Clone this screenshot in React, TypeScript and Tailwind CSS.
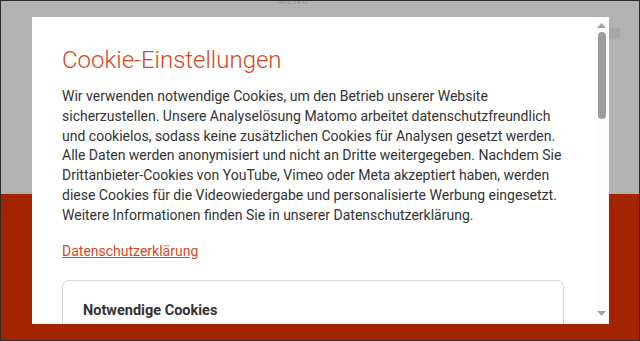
import React from "react";

const bodyText =
  "Wir verwenden notwendige Cookies, um den Betrieb unserer Website sicherzustellen. Unsere Analyselösung Matomo arbeitet datenschutzfreundlich und cookielos, sodass keine zusätzlichen Cookies für Analysen gesetzt werden. Alle Daten werden anonymisiert und nicht an Dritte weitergegeben. Nachdem Sie Drittanbieter-Cookies von YouTube, Vimeo oder Meta akzeptiert haben, werden diese Cookies für die Videowiedergabe und personalisierte Werbung eingesetzt. Weitere Informationen finden Sie in unserer Datenschutzerklärung.";

const App: React.FC = () => {
  return (
    <div
      className="relative w-[640px] h-[341px] overflow-hidden border border-[#2b2b2b] flex flex-col"
      style={{ fontFamily: "Roboto, 'Liberation Sans', sans-serif" }}
    >
      {/* page behind the dimmed overlay */}
      <div className="h-[193px] bg-[#b2b2b2] relative">
        <div className="absolute -top-[8px] left-[276px] text-[10px] tracking-widest text-[#969696]">
          MENÜ
        </div>
        <div className="absolute top-[27px] right-[19px] w-[13px] h-[10px] bg-[#a6a6a6]" />
      </div>
      <div className="flex-1 bg-[#a22400]" />

      {/* modal */}
      <div className="absolute left-[31px] top-[16px] w-[577px] h-[307px] bg-white flex overflow-hidden">
        <div className="flex-1 pl-[30px] pr-[30px] pt-[29px]">
          <h2 className="text-[24px] font-light leading-[29px] text-[#d9461e]">
            Cookie-Einstellungen
          </h2>
          <p className="mt-[12px] text-[14px] leading-[19.8px] text-[#333333]">{bodyText}</p>
          <a href="#" className="block mt-[15px] text-[14px] leading-[20px] text-[#d9461e] underline">
            Datenschutzerklärung
          </a>
          <div className="mt-[19px] border border-[#d6d6d6] rounded-[7px] px-5 pt-[20px] pb-5">
            <h3 className="text-[14.5px] leading-[20px] font-bold text-[#333333]">Notwendige Cookies</h3>
          </div>
        </div>

        {/* scrollbar */}
        <div className="w-[15px] bg-[#fdfdfd] flex flex-col items-center pt-[6px] pb-[8px]">
          <svg width="9" height="5" viewBox="0 0 9 5">
            <path d="M4.5 0 L9 5 L0 5 Z" fill="#a3a3a3" />
          </svg>
          <div className="mt-[4px] w-[8px] h-[87px] rounded-full bg-[#9c9c9c]" />
          <div className="flex-1" />
          <svg width="9" height="5" viewBox="0 0 9 5">
            <path d="M0 0 L9 0 L4.5 5 Z" fill="#a3a3a3" />
          </svg>
        </div>
      </div>
    </div>
  );
};

export default App;
